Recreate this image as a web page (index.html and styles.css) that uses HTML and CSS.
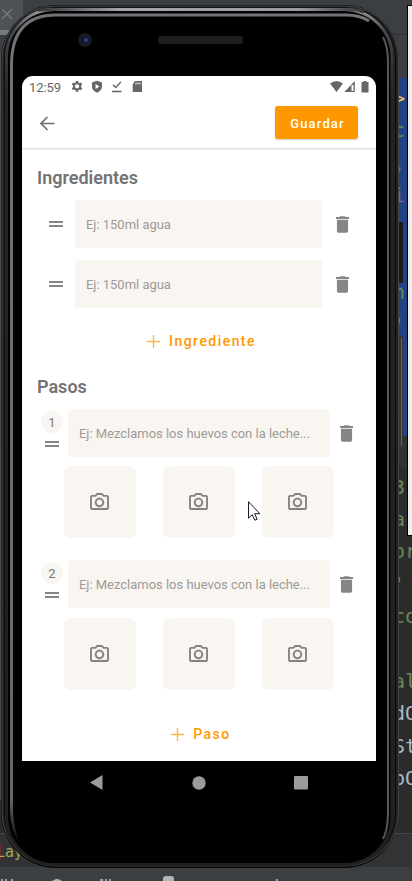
FILE: index.html
```
<!DOCTYPE html>
<html lang="es">
<head>
<meta charset="utf-8">
<title>Receta</title>
<link rel="stylesheet" href="styles.css">
</head>
<body>
<svg class="defs" width="0" height="0">
  <symbol id="drag" viewBox="0 0 14 6"><path d="M0 0h14v2H0zM0 4h14v2H0z"/></symbol>
  <symbol id="trash" viewBox="5 3 14 18"><path d="M6 19c0 1.100.9 2 2 2h8c1.100 0 2-.9 2-2V7H6zM19 4h-3.500l-1-1h-5l-1 1H5v2h14z"/></symbol>
  <symbol id="plus" viewBox="0 0 13 13"><path d="M5.800 0h1.400v5.800H13v1.400H7.200V13H5.800V7.200H0V5.800h5.800z"/></symbol>
  <symbol id="camera" viewBox="2 3 20 18"><path d="M20 5h-3.200L15 3H9L7.200 5H4c-1.100 0-2 .9-2 2v12c0 1.100.9 2 2 2h16c1.100 0 2-.9 2-2V7c0-1.100-.9-2-2-2zm0 14H4V7h4.050l1.800-2h4.300l1.800 2H20zM12 8c-2.760 0-5 2.240-5 5s2.240 5 5 5 5-2.240 5-5-2.240-5-5-5zm0 8c-1.650 0-3-1.350-3-3s1.350-3 3-3 3 1.350 3 3-1.350 3-3 3z"/></symbol>
</svg>
<div class="desktop">
  <div class="gutter"></div>
  <div class="code">
    <p class="tag">&gt;</p><p class="str">c</p><p class="vio">,</p><p class="vio">i</p><p></p><p></p><p class="str">n'</p><p class="str">'</p><p></p><p></p><p></p><p></p><p class="str">3</p><p class="str">a</p><p class="str">or</p><p class="str">'</p><p class="str">co</p><p></p><p class="str">al</p><p class="plain">dO</p><p class="plain">St</p><p class="plain">bO</p>
  </div>
  <div class="tab"><svg width="12" height="12" viewBox="0 0 12 12"><path d="M1 1l10 10M11 1L1 11"/></svg></div>
  <div class="window"></div>
  <div class="crumb"><span>L</span>ay</div>
  <svg class="bottom-bits" width="412" height="6" viewBox="0 0 412 6"><path d="M1 3h2v3H1zM5 3h2v3H5zM11 3h2v3h-2zM100 3h3v3h-3zM105 3h2v3h-2zM109 3h2v3h-2zM276 3h2v3h-2z" fill="#999fa5"/><path d="M51 6q6-6 12 0zM163 6V3q0-3 3-3h5q3 0 3 3v3z" fill="#b2b4b6"/></svg>

  <svg class="frame" width="412" height="881" viewBox="0 0 412 881">
    <defs>
      <linearGradient id="rim" x1="0" y1="0" x2="0" y2="1">
        <stop offset="0" stop-color="#96989b"/><stop offset=".025" stop-color="#45464a"/><stop offset=".1" stop-color="#252525"/><stop offset="1" stop-color="#202020"/>
      </linearGradient>
      <linearGradient id="shine" x1="0" y1="0" x2="0" y2="1">
        <stop offset="0" stop-color="#717379"/><stop offset=".94" stop-color="#62656c"/><stop offset=".99" stop-color="#08080a"/>
      </linearGradient>
      <linearGradient id="top" x1="0" y1="0" x2="1" y2="0">
        <stop offset="0" stop-color="#333"/><stop offset=".25" stop-color="#a4a6a8"/><stop offset=".8" stop-color="#999b9e"/><stop offset="1" stop-color="#333"/>
      </linearGradient>
    </defs>
    <rect x="398" y="222" width="5" height="61" rx="1" fill="#1b1b1c"/>
    <rect x="398" y="336" width="5" height="112" rx="1" fill="#343435"/>
    <path d="M401.500 338v108" stroke="#666" fill="none"/>
    <rect x="1" y="5" width="398" height="863" rx="55" fill="#050505"/>
    <rect x="2" y="6" width="396.500" height="860" rx="53" fill="#202021" stroke="#464648"/>
    <rect x="4.500" y="8" width="391" height="856" rx="50" fill="none" stroke="#0c0c0c"/>
    <rect x="6.500" y="9.500" width="385.500" height="855" rx="48" fill="#020202" stroke="url(#rim)" stroke-width="3"/>
    <path d="M38 10Q44 9.500 52 9.500H350Q358 9.500 364 12" fill="none" stroke="url(#top)" stroke-width="3"/>
    <path d="M28 850Q11.500 836 11.500 808V65Q11.500 15 56 15H346Q360 15 369 21" fill="none" stroke="url(#shine)" stroke-width="3"/>
    <path d="M14 812V67Q14 17 58 17H340Q386 17 386 67V812Q386 863 336 863H58Q14 863 14 812z" fill="#000"/>
    <path d="M383 37Q388 47 388 62V812Q388 830 383 839" fill="none" stroke="#56565c" stroke-width="2"/>
    <circle cx="85" cy="40" r="7" fill="#1c1c1e"/><circle cx="85" cy="40" r="4" fill="#12163a"/><circle cx="86" cy="40" r="2" fill="#34406f"/>
    <rect x="158" y="36" width="85" height="8" rx="3" fill="#1c1f1f"/>
  </svg>

  <div class="phone">
    <main class="screen">
      <div class="status">
        <span class="clock">12:59</span>
        <svg class="st-left" width="72" height="14" viewBox="0 0 72 14">
          <path fill-rule="evenodd" d="M4.900 1h2.300l.3 1.500 1.200.7 1.400-.6 1.200 2-1.200 1v1.600l1.200 1-1.200 2-1.400-.6-1.200.7-.3 1.500H4.900l-.3-1.500-1.200-.7-1.400.6-1.200-2 1.200-1V5.600l-1.200-1 1.200-2 1.400.6 1.200-.7zM6.050 4.200a2.100 2.100 0 1 0 0 4.300 2.100 2.100 0 0 0 0-4.300z"/>
          <path fill-rule="evenodd" d="M26 .8l5 1.700v4.300q0 3.700-5 6-5-2.300-5-6V2.500zM24.500 4v5l4-2.500z"/>
          <path d="M41 10.800h9.500v1.400H41zM41.500 5.200l1-1 2.200 2.200L49.400 1.500l1 1-5.700 6z"/>
          <path fill-rule="evenodd" d="M64 1h7v11h-9.300V4.200zM64.500 2.500v2h1v-2zm2 0v2h1v-2zm2 0v2h1v-2z"/>
        </svg>
        <svg class="st-right" width="40" height="12" viewBox="0 0 40 12">
          <path d="M0 2.500Q6.500-2.500 13 2.500L6.500 11zM24.800 0v11H14.300zM23.500 4h-2v6h2z" fill-rule="evenodd"/>
          <path d="M33.500 0h3v1H38.500v10.500h-7V1h2z"/>
        </svg>
      </div>
      <header class="bar">
        <svg width="15" height="15" viewBox="0 0 15 15"><path d="M7.500 1L1 7.500 7.500 14M1 7.500h13.500"/></svg>
        <button class="save">Guardar</button>
      </header>
      <section class="ingredients">
        <h2>Ingredientes</h2>
        <div class="ing"><svg class="drag"><use href="#drag"/></svg><div class="field">Ej: 150ml agua</div><svg class="trash"><use href="#trash"/></svg></div>
        <div class="ing"><svg class="drag"><use href="#drag"/></svg><div class="field">Ej: 150ml agua</div><svg class="trash"><use href="#trash"/></svg></div>
        <div class="add"><svg><use href="#plus"/></svg><span>Ingrediente</span></div>
      </section>
      <section class="steps">
        <h2>Pasos</h2>
        <div class="step">
          <div class="row"><div class="grip"><b>1</b><svg class="drag"><use href="#drag"/></svg></div><div class="field">Ej: Mezclamos los huevos con la leche...</div><svg class="trash"><use href="#trash"/></svg></div>
          <div class="photos"><div><svg><use href="#camera"/></svg></div><div><svg><use href="#camera"/></svg></div><div><svg><use href="#camera"/></svg></div></div>
        </div>
        <div class="step">
          <div class="row"><div class="grip"><b>2</b><svg class="drag"><use href="#drag"/></svg></div><div class="field">Ej: Mezclamos los huevos con la leche...</div><svg class="trash"><use href="#trash"/></svg></div>
          <div class="photos"><div><svg><use href="#camera"/></svg></div><div><svg><use href="#camera"/></svg></div><div><svg><use href="#camera"/></svg></div></div>
        </div>
        <div class="add"><svg><use href="#plus"/></svg><span>Paso</span></div>
      </section>
    </main>
    <nav class="nav">
      <svg width="13" height="15" viewBox="0 0 13 15"><path d="M12.500 0v15L0 7.500z"/></svg>
      <svg width="14" height="14" viewBox="0 0 14 14"><circle cx="7" cy="7" r="6.700"/></svg>
      <svg width="14" height="14" viewBox="0 0 14 14"><rect width="14" height="13.500" rx="1"/></svg>
    </nav>
  </div>
  <svg class="cursor" width="13" height="20" viewBox="0 0 13 20"><path d="M.5.700v16.500l3.700-3.500 2.700 5.500 2.300-1-2.600-5.500h5.200z"/></svg>
</div>
</body>
</html>
```
FILE: styles.css
```
* { box-sizing: border-box; }
body { margin: 0; font-family: Roboto, "Liberation Sans", sans-serif; }
p, h2 { margin: 0; }
svg { display: block; flex: none; }
.defs { position: absolute; }

.desktop {
  position: relative;
  width: 412px;
  height: 881px;
  overflow: hidden;
  background: linear-gradient(#3c3f41 0 34px, #2f3133 34px 35px, #3c3f41 35px 78px, #214283 78px 436px, #323232 436px 468px, #2b2b2b 468px 833px, #454545 833px 834px, #313335 834px 867px, #3c3f41 867px);
}
.gutter {
  position: absolute;
  left: 0;
  top: 35px;
  width: 40px;
  height: 798px;
  background: linear-gradient(#3c3f41 0 18px, #4a4c4e 18px 765px, #2b2b2b 765px);
}
.code {
  position: absolute;
  left: 393px;
  top: 82px;
  font: 20px/32.4px "DejaVu Sans Mono", monospace;
}
.code p { height: 32.4px; white-space: pre; }
.tag { color: #e8bf6a; }
.str { color: #6a8759; }
.vio { color: #77649a; }
.plain { color: #a9b7c6; }
.tab {
  position: absolute;
  left: 0;
  top: 0;
  width: 23px;
  height: 35px;
  padding: 8px 1px;
  background: #4e5254;
  border-bottom: 5px solid #747a80;
}
.tab path { stroke: #777b7e; stroke-width: 1.3; }
.window {
  position: absolute;
  left: 407px;
  top: 5px;
  width: 10px;
  height: 531px;
  border: 1px solid #000;
  background: #f0eeef;
}
.crumb {
  position: absolute;
  left: -4px;
  top: 842px;
  font: 15px/20px "DejaVu Sans Mono", monospace;
  color: #a5a65c;
}
.crumb span { color: #b7a04e; background: linear-gradient(90deg, #6d2b2b 5px, transparent 5px); }
.bottom-bits { position: absolute; left: 0; top: 876px; }
.frame { position: absolute; left: 0; top: 0; }

.phone { position: absolute; left: 22px; top: 76px; width: 354px; }
.screen {
  height: 685px;
  overflow: hidden;
  border-radius: 11px 11px 0 0;
  background: #fff;
}
.status { display: flex; align-items: center; height: 22px; padding: 0 6px 0 7px; }
.clock { width: 42px; font-size: 13px; letter-spacing: -.1px; color: #666; }
.status svg { fill: #666; }
.st-right { margin-left: auto; }
.bar {
  display: flex;
  align-items: center;
  justify-content: space-between;
  height: 51px;
  padding: 0 18px 1px 18px;
  border-bottom: 1px solid #e2e2e2;
  box-shadow: 0 1px 1px #f3f3f3;
}
.bar svg { margin-top: 1px; }
.bar path { fill: none; stroke: #6d6d6d; stroke-width: 1.6; }
.save {
  width: 83px;
  height: 33px;
  padding: 1px 0 0 2px;
  border: 0;
  border-radius: 3px;
  background: #ff9800;
  box-shadow: 0 1px 2px #ccc;
  font: 500 13px Roboto, sans-serif;
  letter-spacing: 1.15px;
  color: #fff;
}
h2 { padding-left: 15px; font-size: 18px; font-weight: 600; line-height: 22px; color: #737373; }
.ingredients { padding-top: 18px; }
.ing { display: flex; align-items: center; height: 48px; margin: 11px 0 12px; padding-left: 27px; }
.ing + .ing { margin-top: 12px; }
.field {
  height: 48px;
  border-radius: 4px 4px 0 0;
  background: #f9f5f1;
  padding-left: 11px;
  font-size: 13px;
  line-height: 50px;
  letter-spacing: -.02px;
  white-space: nowrap;
  color: #9d9b98;
}
.ing .field { width: 247px; margin-left: 12px; }
.drag { width: 14px; height: 6px; fill: #858585; }
.trash { width: 13px; height: 17px; margin-left: 13.5px; fill: #858585; }
.add {
  display: flex;
  align-items: center;
  justify-content: center;
  gap: 9px;
  height: 22px;
  font-size: 14px;
  font-weight: 500;
  letter-spacing: 1.45px;
  color: #ff9800;
}
.add svg { width: 13px; height: 13px; fill: #ffb74d; }
.ingredients .add { margin-top: 22px; padding-left: 5px; }
.steps { padding-top: 24px; }
.step { height: 129px; margin-top: 11px; }
.step + .step { margin-top: 22px; }
.row { display: flex; padding-left: 19px; }
.grip { display: flex; flex-direction: column; align-items: center; gap: 8px; width: 22px; padding-top: 2px; }
.grip b { width: 22px; height: 22px; border-radius: 50%; background: #f9f5f1; font: 13px/23px Roboto, sans-serif; text-align: center; color: #777; }
.row .field { width: 262px; margin-left: 5px; }
.row .trash { margin: 16px 0 0 9.5px; }
.photos { display: flex; gap: 27px; margin: 9px 0 0 42px; }
.step + .step .photos { margin-top: 10px; }
.photos div { display: flex; align-items: center; justify-content: center; width: 72px; height: 72px; padding: 0 1px 2px 0; border-radius: 7px; background: #f9f5f1; }
.photos svg { width: 19px; height: 17px; fill: #858380; }
.steps .add { margin-top: 34px; padding-left: 4px; }
.nav { display: flex; align-items: center; justify-content: space-between; height: 43px; padding: 0 68px; }
.nav svg { fill: #9b9b9b; }
.cursor { position: absolute; left: 248px; top: 501px; }
.cursor path { fill: #fff; stroke: #181828; stroke-width: 1; }
```
